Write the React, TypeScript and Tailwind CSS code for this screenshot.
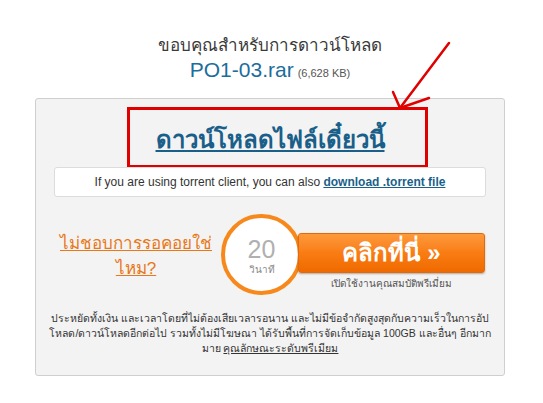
export default function App() {
  return (
    <div className="relative w-[543px] h-[403px] bg-white overflow-hidden font-['Liberation_Sans','Noto_Sans',sans-serif]">
      <div className="w-[470px] ml-[35px] pt-[35px] flex flex-col items-center">
        <div className="text-[17px] leading-[22px] text-[#3a3a3a]">ขอบคุณสำหรับการดาวน์โหลด</div>
        <div className="flex items-baseline gap-1 mt-[1px]">
          <span className="text-[21px] leading-[24px] text-[#1b6d9c]">PO1-03.rar</span>
          <span className="text-[11px] text-[#555]">(6,628 KB)</span>
        </div>

        <div className="w-full mt-[16px] h-[278px] bg-[#f3f3f3] border border-[#cfcfcf] rounded-[3px] flex flex-col">
          <div className="self-start ml-[91px] mt-[8px] w-[301px] h-[61px] border-[3px] border-[#e00000] flex items-center justify-center pr-[15px]">
            <a className="text-[24px] font-bold text-[#1a5f8a] underline decoration-2 underline-offset-2 mt-[4px] whitespace-nowrap">
              ดาวน์โหลดไฟล์เดี๋ยวนี้
            </a>
          </div>
          <div className="self-center -mt-[1px] w-[432px] h-[30px] bg-white border border-[#dcdcdc] rounded-[3px] flex items-center justify-center text-[12px] text-[#333]">
            If you are using torrent client, you can also&nbsp;
            <a className="font-bold text-[#1a5f8a] underline">download .torrent file</a>
          </div>

          <div className="w-full mt-[17px] flex items-start">
            <div className="w-[200px] pt-[17px] text-center">
              <a className="text-[17px] leading-[25px] text-[#e87818] underline">ไม่ชอบการรอคอยใช่<br />ไหม?</a>
            </div>
            <div className="ml-[-15px] w-[81px] h-[81px] rounded-full border-[4px] border-[#f7891c] bg-white flex flex-col items-center justify-center">
              <span className="text-[25px] leading-[28px] text-[#b0b0b0] mt-[2px]">20</span>
              <span className="text-[10px] leading-[14px] text-[#888]">วินาที</span>
            </div>
            <div className="ml-[-4px] pt-[19px] flex flex-col items-center">
              <div className="w-[187px] h-[40px] rounded-[3px] bg-gradient-to-b from-[#fd9a3a] via-[#f97c12] to-[#ef6a00] border border-[#e36a0a] shadow-[0_1px_2px_rgba(0,0,0,0.3)] flex items-center justify-center">
                <span className="text-[24px] font-bold text-white">คลิกที่นี่ »</span>
              </div>
              <span className="mt-[3px] text-[10px] text-[#555]">เปิดใช้งานคุณสมบัติพรีเมี่ยม</span>
            </div>
          </div>

          <div className="mt-[16px] flex flex-col items-center text-[10.5px] text-[#333] whitespace-nowrap">
            <span className="block h-[15px] leading-[15px]">ประหยัดทั้งเงิน และเวลาโดยที่ไม่ต้องเสียเวลารอนาน และไม่มีข้อจำกัดสูงสุดกับความเร็วในการอัป</span>
            <span className="block h-[15px] leading-[15px]">โหลด/ดาวน์โหลดอีกต่อไป รวมทั้งไม่มีโฆษณา ได้รับพื้นที่การจัดเก็บข้อมูล 100GB และอื่นๆ อีกมาก</span>
            <span className="block h-[15px] leading-[15px]">
              มาย <a className="underline">คุณลักษณะระดับพรีเมียม</a>
            </span>
          </div>
        </div>
      </div>

      <svg className="absolute left-0 top-0" width="543" height="403" viewBox="0 0 543 403">
        <g stroke="#e00000" strokeWidth="2.5" strokeLinecap="round" fill="none">
          <line x1="449" y1="43" x2="400" y2="108" />
          <line x1="400" y1="108" x2="393" y2="92" />
          <line x1="400" y1="108" x2="429" y2="98" />
        </g>
      </svg>
    </div>
  );
}
